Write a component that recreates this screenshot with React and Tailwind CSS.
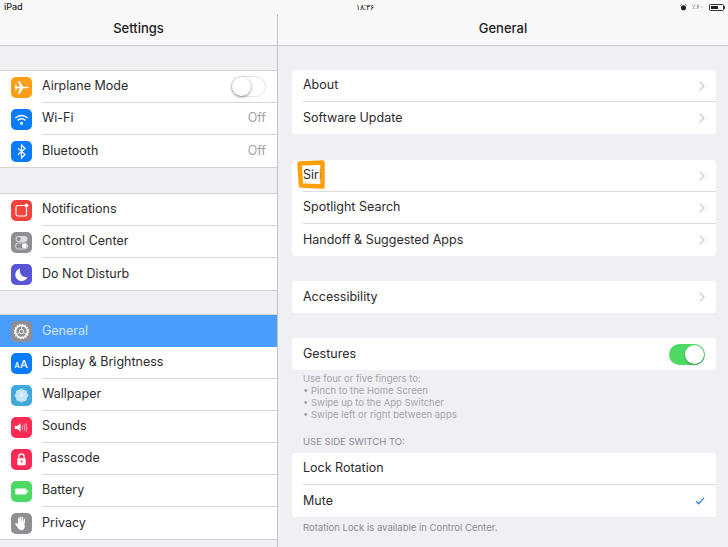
import React from 'react'

const font = { fontFamily: 'Inter' }

function Tile({ color, children }) {
  return (
    <div className={`w-[21px] h-[21px] rounded-[5px] shrink-0 flex items-center justify-center ${color}`}>
      <svg viewBox="0 0 21 21" className="w-[21px] h-[21px]">{children}</svg>
    </div>
  )
}

const icons = {
  airplane: (
    <Tile color="bg-[#ff9d14]">
      <path d="M3.5 10.5 Q3.5 9.8 5 9.8 L8.6 9.8 L6.9 4 L8.6 4 L12.3 9.8 L15.6 9.8 Q18 9.9 18 10.5 Q18 11.1 15.6 11.2 L12.3 11.2 L8.6 17 L6.9 17 L8.6 11.2 L5 11.2 Q3.5 11.2 3.5 10.5 Z" fill="#fff" />
      <path d="M4 7.6 L5 7.6 L6.3 9.8 L4.4 9.8 Z M4 13.4 L5 13.4 L6.3 11.2 L4.4 11.2 Z" fill="#fff" />
    </Tile>
  ),
  wifi: (
    <Tile color="bg-[#0a7bfb]">
      <path d="M4.3 9 Q10.5 4.2 16.7 9" fill="none" stroke="#fff" strokeWidth="1.5" />
      <path d="M6.6 11.4 Q10.5 8.3 14.4 11.4" fill="none" stroke="#fff" strokeWidth="1.5" />
      <circle cx="10.5" cy="14.2" r="1.5" fill="#fff" />
    </Tile>
  ),
  bluetooth: (
    <Tile color="bg-[#0a7bfb]">
      <path d="M7 7.3 L14 13.5 L10.5 17 L10.5 4 L14 7.5 L7 13.7" fill="none" stroke="#fff" strokeWidth="1.2" />
    </Tile>
  ),
  notifications: (
    <Tile color="bg-[#f6423a]">
      <rect x="5" y="5.5" width="10.5" height="10.5" rx="2" fill="none" stroke="#fff" strokeWidth="1.2" />
      <circle cx="15.4" cy="5.4" r="2.6" fill="#f6423a" />
      <circle cx="15.4" cy="5.4" r="2" fill="#fff" />
    </Tile>
  ),
  control: (
    <Tile color="bg-[#8e8e93]">
      <rect x="4.5" y="4" width="12" height="6" rx="3" fill="#dcdcde" />
      <circle cx="7.6" cy="7" r="2.1" fill="#8e8e93" />
      <rect x="4.5" y="11" width="12" height="6" rx="3" fill="none" stroke="#dcdcde" strokeWidth="1" />
      <circle cx="13.4" cy="14" r="2.4" fill="#fff" />
    </Tile>
  ),
  moon: (
    <Tile color="bg-[#5856d6]">
      <path d="M9.2 4.6 A6.3 6.3 0 1 0 16.4 13.2 A6.6 6.6 0 0 1 9.2 4.6 Z" fill="#fff" />
    </Tile>
  ),
  general: (
    <Tile color="bg-[#8e8e93]">
      <circle cx="10.5" cy="10.5" r="6" fill="none" stroke="#fff" strokeWidth="1.6" />
      <circle cx="10.5" cy="10.5" r="7.1" fill="none" stroke="#fff" strokeWidth="1.2" strokeDasharray="1.4 1.4" />
      <circle cx="10.5" cy="10.5" r="2.2" fill="none" stroke="#fff" strokeWidth="0.9" />
      <path d="M10.5 8.3 L10.5 5 M8.6 11.6 L5.7 13.3 M12.4 11.6 L15.3 13.3" stroke="#fff" strokeWidth="0.8" />
    </Tile>
  ),
  display: (
    <Tile color="bg-[#0a7bfb]">
      <text x="3.6" y="14.6" fontSize="7" fontWeight="600" fill="#fff" fontFamily="Inter">A</text>
      <text x="9" y="15" fontSize="11" fontWeight="500" fill="#fff" fontFamily="Inter">A</text>
    </Tile>
  ),
  wallpaper: (
    <Tile color="bg-[#40a9dc]">
      {[0, 45, 90, 135, 180, 225, 270, 315].map((a) => (
        <circle key={a} cx="10.5" cy="5.9" r="2.3" fill="#fff" fillOpacity="0.65" transform={`rotate(${a} 10.5 10.5)`} />
      ))}
      <circle cx="10.5" cy="10.5" r="2.4" fill="#fff" fillOpacity="0.9" />
    </Tile>
  ),
  sounds: (
    <Tile color="bg-[#fb2b55]">
      <path d="M3.8 8.9 L6.2 8.9 L9.6 6.2 L9.6 14.8 L6.2 12.1 L3.8 12.1 Z" fill="#fff" />
      <path d="M11.2 8.6 Q12.2 10.5 11.2 12.4 M13 7.4 Q14.6 10.5 13 13.6 M14.8 6.2 Q17 10.5 14.8 14.8" fill="none" stroke="#fff" strokeOpacity="0.8" strokeWidth="0.8" />
    </Tile>
  ),
  passcode: (
    <Tile color="bg-[#fb2b55]">
      <path d="M7.9 9.5 L7.9 7.6 A2.6 2.6 0 0 1 13.1 7.6 L13.1 9.5" fill="none" stroke="#fff" strokeWidth="1.3" />
      <rect x="6.3" y="9.3" width="8.4" height="6.9" rx="1" fill="#fff" />
      <circle cx="10.5" cy="12.4" r="1" fill="#fb2b55" />
    </Tile>
  ),
  battery: (
    <Tile color="bg-[#4cd964]">
      <rect x="4.2" y="7.6" width="11.4" height="5.8" rx="1" fill="#fff" />
      <rect x="16" y="9.5" width="1.2" height="2" fill="#fff" />
    </Tile>
  ),
  privacy: (
    <Tile color="bg-[#8e8e93]">
      <path d="M7 11 L7 5.6 Q7 4.8 7.7 4.8 Q8.3 4.8 8.3 5.6 L8.4 9.5 L8.7 4.2 Q8.8 3.4 9.5 3.4 Q10.1 3.4 10.1 4.2 L10.2 9.4 L10.8 4.4 Q10.9 3.7 11.6 3.8 Q12.2 3.9 12.1 4.7 L11.9 9.8 L13 6.1 Q13.2 5.4 13.8 5.6 Q14.4 5.8 14.2 6.5 L13.4 12 L13.9 13.6 Q13.4 17.2 10.2 17.2 Q8 17.2 6.8 14.8 L4.4 11.2 Q4 10.4 4.6 10 Q5.2 9.7 5.7 10.3 Z" fill="#fff" />
    </Tile>
  ),
}

const sidebarGroups = [
  [
    { icon: 'airplane', label: 'Airplane Mode', toggle: true },
    { icon: 'wifi', label: 'Wi-Fi', value: 'Off' },
    { icon: 'bluetooth', label: 'Bluetooth', value: 'Off' },
  ],
  [
    { icon: 'notifications', label: 'Notifications' },
    { icon: 'control', label: 'Control Center' },
    { icon: 'moon', label: 'Do Not Disturb' },
  ],
  [
    { icon: 'general', label: 'General', selected: true },
    { icon: 'display', label: 'Display & Brightness' },
    { icon: 'wallpaper', label: 'Wallpaper' },
    { icon: 'sounds', label: 'Sounds' },
    { icon: 'passcode', label: 'Passcode' },
    { icon: 'battery', label: 'Battery' },
    { icon: 'privacy', label: 'Privacy' },
  ],
]

function Chevron() {
  return (
    <svg viewBox="0 0 6 10" className="w-[6px] h-[10px] mr-[11px]">
      <path d="M0.7 0.7 L5 5 L0.7 9.3" fill="none" stroke="#c7c7cc" strokeWidth="1.2" />
    </svg>
  )
}

function Toggle({ on }) {
  if (on) {
    return (
      <div className="w-[36px] h-[21px] rounded-full bg-[#4cd964] flex items-center justify-end pr-[1px]">
        <div className="w-[19px] h-[19px] rounded-full bg-white shadow-[0_1px_2px_rgba(0,0,0,0.35)]" />
      </div>
    )
  }
  return (
    <div className="w-[35px] h-[21px] rounded-full bg-white border border-[#e3e3e6] flex items-center">
      <div className="w-[19px] h-[19px] rounded-full bg-white shadow-[0_1px_3px_rgba(0,0,0,0.45)]" />
    </div>
  )
}

function SidebarRow({ item, last }) {
  return (
    <div className={`h-[32px] flex items-center pl-[11px] ${item.selected ? 'bg-[#4a9dfb]' : ''}`}>
      <div className="relative">{icons[item.icon]}</div>
      <div className={`ml-[10px] flex-1 self-stretch flex items-center pr-[11px] ${last || item.selected ? '' : 'border-b border-[#d9d9dc]'}`}>
        <span className={`flex-1 text-[12.5px] ${item.selected ? 'text-[#cfe5ff]' : 'text-[#2b2b2d]'}`}>{item.label}</span>
        {item.value && <span className="text-[12.5px] text-[#a3a3a8]">{item.value}</span>}
        {item.toggle && <Toggle />}
      </div>
    </div>
  )
}

function SettingsRow({ label, last, right }) {
  return (
    <div className="h-[32px] flex items-stretch pl-[11px]">
      <div className={`flex-1 flex items-center justify-between ${last ? '' : 'border-b border-[#dcdcdf]'}`}>
        <span className="text-[12.5px] text-[#2b2b2d]">{label}</span>
        {right}
      </div>
    </div>
  )
}

function Card({ rows, className }) {
  return (
    <div className={`bg-white rounded-[3px] ${className}`}>
      {rows.map((r, i) => (
        <SettingsRow key={r} label={r} last={i === rows.length - 1} right={<Chevron />} />
      ))}
    </div>
  )
}

export default function App() {
  return (
    <div className="relative w-[728px] h-[547px] overflow-hidden bg-[#efeff4] flex flex-col" style={font}>
      <div className="h-[14px] shrink-0 bg-[#f8f8f8] flex items-center text-[9px] text-[#222] pl-[4px] pr-[3px]">
        <span className="w-[352px] font-medium">iPad</span>
        <span className="flex-1 text-[8px]" style={{ fontFamily: 'Noto Sans, sans-serif' }}>۱۸:۳۶</span>
        <svg viewBox="0 0 8 8" className="w-[7px] h-[7px] mr-[5px]">
          <circle cx="4" cy="4.3" r="2.9" fill="#222" />
          <path d="M0.5 1.5 L2 0.4 M7.5 1.5 L6 0.4" stroke="#222" strokeWidth="0.9" />
        </svg>
        <span className="text-[7px] text-[#666] mr-[5px]" style={{ fontFamily: 'Noto Sans, sans-serif' }}>٪۶۰</span>
        <div className="w-[15px] h-[7px] rounded-[1.5px] border border-[#333] p-[1px]">
          <div className="w-[7px] h-full bg-[#222]" />
        </div>
        <div className="w-[1px] h-[3px] bg-[#333]" />
      </div>

      <div className="flex-1 flex min-h-0">
        <div className="w-[277px] shrink-0">
          <div className="h-[32px] bg-[#f8f8f8] border-b border-[#c8c8cb] flex items-center justify-center pb-[2px] text-[13px] font-medium text-[#1d1d1f]">
            Settings
          </div>
          {sidebarGroups.map((group, g) => (
            <div
              key={group[0].label}
              className={`bg-white border-y border-[#d3d3d6] ${g === 0 ? 'mt-[24px]' : g === 1 ? 'mt-[25px]' : 'mt-[23px]'}`}
            >
              {group.map((item, i) => (
                <SidebarRow key={item.label} item={item} last={i === group.length - 1} />
              ))}
            </div>
          ))}
        </div>

        <div className="w-[1px] shrink-0 bg-[#c4c4c7]" />

        <div className="flex-1 min-w-0">
          <div className="h-[32px] bg-[#f8f8f8] border-b border-[#c8c8cb] flex items-center justify-center pb-[2px] text-[13px] font-medium text-[#1d1d1f]">
            General
          </div>
          <div className="pl-[14px] pr-[12px]">
            <Card className="mt-[24px]" rows={['About', 'Software Update']} />
            <Card className="mt-[26px]" rows={['Siri', 'Spotlight Search', 'Handoff & Suggested Apps']} />
            <Card className="mt-[25px]" rows={['Accessibility']} />
            <div className="mt-[25px] bg-white rounded-[3px]">
              <SettingsRow label="Gestures" last right={<div className="mr-[11px]"><Toggle on /></div>} />
            </div>
            <div className="mt-[3px] pl-[11px] text-[9.5px] leading-[12px] text-[#a6a6aa]">
              <p>Use four or five fingers to:</p>
              <p>• Pinch to the Home Screen</p>
              <p>• Swipe up to the App Switcher</p>
              <p>• Swipe left or right between apps</p>
            </div>
            <div className="mt-[15px] pl-[11px] text-[9.5px] leading-[12px] text-[#8c8c91]">USE SIDE SWITCH TO:</div>
            <div className="mt-[5px] bg-white rounded-[3px]">
              <SettingsRow label="Lock Rotation" />
              <SettingsRow
                label="Mute"
                last
                right={
                  <svg viewBox="0 0 11 9" className="w-[10px] h-[8px] mr-[11px]">
                    <path d="M1 4.8 L4 7.6 L10 1" fill="none" stroke="#2f7fd8" strokeWidth="1.4" />
                  </svg>
                }
              />
            </div>
            <div className="mt-[5px] pl-[11px] text-[9.5px] leading-[12px] text-[#8c8c91]">Rotation Lock is available in Control Center.</div>
          </div>
        </div>
      </div>

      {/* hand-drawn highlight on the Siri row */}
      <svg viewBox="0 0 30 30" className="absolute left-[296px] top-[160px] w-[30px] h-[30px]">
        <path d="M3.5 3.5 L26.5 2.5 L26.5 26.5 L5 25.5 Z" fill="none" stroke="#ff9f0a" strokeWidth="4.5" strokeLinejoin="round" />
      </svg>
    </div>
  )
}
